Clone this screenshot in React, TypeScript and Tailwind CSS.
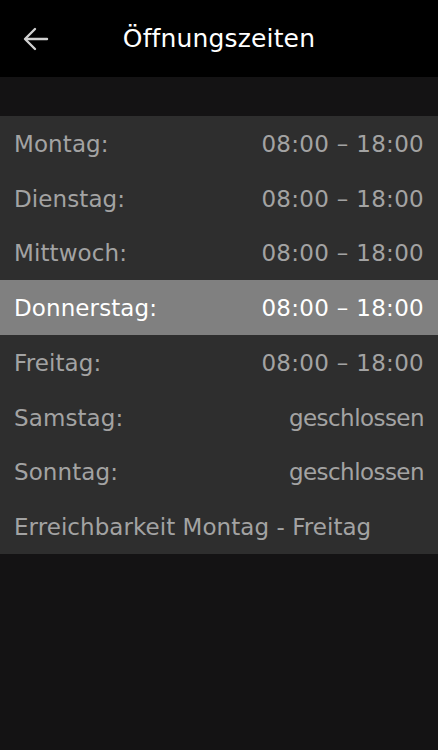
import React from "react";

const rows = [
  { day: "Montag:", time: "08:00 – 18:00" },
  { day: "Dienstag:", time: "08:00 – 18:00" },
  { day: "Mittwoch:", time: "08:00 – 18:00" },
  { day: "Donnerstag:", time: "08:00 – 18:00", active: true },
  { day: "Freitag:", time: "08:00 – 18:00" },
  { day: "Samstag:", time: "geschlossen", closed: true },
  { day: "Sonntag:", time: "geschlossen", closed: true },
];

export default function App() {
  return (
    <div
      className="w-[438px] h-[750px] bg-[#141314] flex flex-col"
      style={{ fontFamily: '"DejaVu Sans", sans-serif' }}
    >
      <div className="h-[77px] bg-black flex items-center relative">
        <div className="absolute left-[22px] top-[26px]">
          <svg width="28" height="26" viewBox="0 0 28 26" fill="none" stroke="#d0d0d0" strokeWidth="2.4" strokeLinecap="round" strokeLinejoin="round">
            <path d="M25 13H4" />
            <path d="M13 3L3 13L13 23" />
          </svg>
        </div>
        <div className="flex-1 text-center text-white text-[25px] pt-[1px] tracking-[0.15px]">Öffnungszeiten</div>
      </div>
      <div className="h-[39px]" />
      <div className="bg-[#2e2e2e] flex flex-col">
        {rows.map((r) => (
          <div
            key={r.day}
            className={`h-[54.7px] flex items-center justify-between pl-[14px] pr-[14px] text-[23px] pt-[2px] ${
              r.active ? "bg-[#808080] text-white" : "text-[#a3a3a3]"
            }`}
          >
            <span className="tracking-[0.1px]">{r.day}</span>
            <span className={r.closed ? "tracking-[-0.55px]" : "tracking-[0.3px]"}>{r.time}</span>
          </div>
        ))}
        <div className="h-[54.7px] flex items-center px-[14px] text-[23px] pt-[2px] text-[#a3a3a3] tracking-[0.05px]">
          Erreichbarkeit Montag - Freitag
        </div>
      </div>
    </div>
  );
}
